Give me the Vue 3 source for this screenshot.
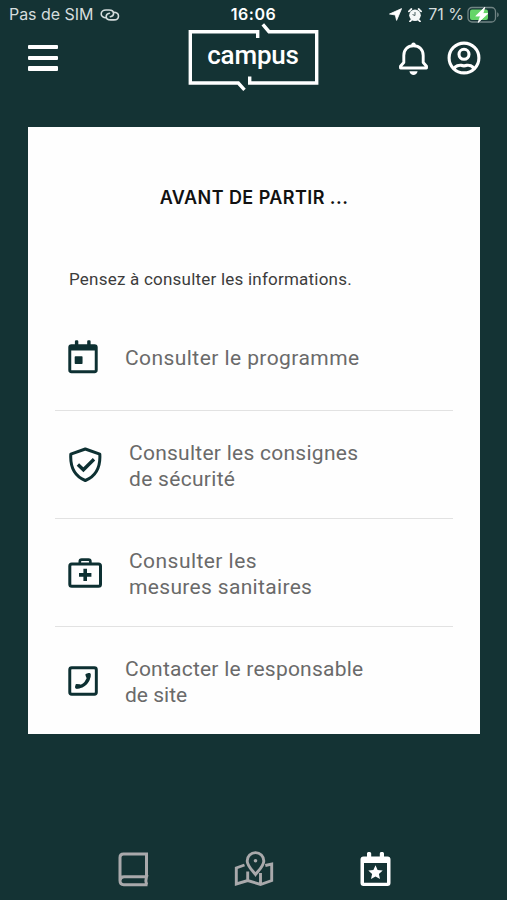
<script setup>
import { ref } from 'vue'

const activeTab = ref('agenda')

const items = [
  { icon: 'calendar', lines: [{ text: 'Consulter le programme', spacing: 0.43 }] },
  {
    icon: 'shield',
    lines: [
      { text: 'Consulter les consignes', spacing: 0.26 },
      { text: 'de sécurité', spacing: 0.3 },
    ],
  },
  {
    icon: 'kit',
    lines: [
      { text: 'Consulter les', spacing: 0.45 },
      { text: 'mesures sanitaires', spacing: 0.33 },
    ],
  },
  {
    icon: 'phone',
    lines: [
      { text: 'Contacter le responsable', spacing: 0.23 },
      { text: 'de site', spacing: 0 },
    ],
  },
]
</script>

<template>
  <div class="screen">
    <!-- Status bar -->
    <div class="status">
      <div class="status-left">
        <span class="carrier">Pas de SIM</span>
        <svg class="link" width="20" height="12" viewBox="0 0 20 12" fill="none" stroke="#d5dddd" stroke-width="1.6" stroke-linecap="round">
          <path d="M6 8.7C3.2 8.7 1.2 7.2 1.2 5C1.2 2.6 3.2 1 6 1H9C11.8 1 13.6 2.6 13.6 4.6C13.6 6.2 12.3 7.5 10.3 7.7" />
          <path d="M13.4 3.2C16.5 3.2 18.5 4.7 18.5 6.9C18.5 9.3 16.5 10.9 13.8 10.9H10.8C8 10.9 6.2 9.3 6.2 7.4C6.2 5.7 7.5 4.4 9.5 4.2" />
        </svg>
      </div>
      <span class="clock">16:06</span>
      <div class="status-right">
        <svg width="13" height="13" viewBox="0 0 13 13"><path d="M12.6 0.6L7.6 12.4L6.3 7L0.5 6Z" fill="#fff" stroke="#fff" stroke-width="0.8" stroke-linejoin="round" /></svg>
        <svg width="14" height="14" viewBox="0 0 14 14">
          <circle cx="7" cy="7.3" r="5.8" fill="#f4f7f7" />
          <path d="M0.9 3.3L3.4 1M13.1 3.3L10.6 1M3.2 12.2L2 13.4M10.8 12.2L12 13.4" stroke="#f4f7f7" stroke-width="1.8" stroke-linecap="round" />
          <path d="M7 4.4V7.5L4.9 6.7" fill="none" stroke="#4d6263" stroke-width="1" stroke-linecap="round" />
        </svg>
        <span class="percent">71 %</span>
        <svg class="battery" width="33" height="18" viewBox="0 0 33 18">
          <rect x="1" y="1.5" width="27.5" height="14.5" rx="4" fill="none" stroke="#718484" stroke-width="1.3" />
          <path d="M30.2 6.2C32.2 7 32.2 10.4 30.2 11.2Z" fill="#718484" />
          <rect x="3" y="3.5" width="18" height="10.5" rx="2" fill="#65d568" />
          <path d="M17.8 1.2L8.8 10H13.6L11.2 16.4L20.8 7.6H15.8Z" fill="#fff" stroke="#fff" stroke-width="0.9" stroke-linejoin="round" />
        </svg>
      </div>
    </div>

    <!-- Header -->
    <header class="header">
      <button class="burger" aria-label="Menu"><i></i><i></i><i></i></button>
      <div class="logo">
        <svg class="logo-frame" width="132" height="70" viewBox="0 0 132 70" fill="none" stroke="#fff" stroke-width="3.4">
          <path d="M70.7 16V9.7H3.3V61H51.3L57.5 67.8" />
          <path d="M62.7 54.5V61H129.7V9.7H82L75.8 2.3" />
        </svg>
        <span class="logo-text">campus</span>
      </div>
      <div class="actions">
        <svg width="32" height="36" viewBox="0 0 32 36">
          <path d="M2.5 27V25.3L5.8 21.5V14.5C5.8 9 9.5 4.8 15.5 4.8S25.2 9 25.2 14.5V21.5L28.5 25.3V27Z" fill="none" stroke="#fff" stroke-width="2.9" stroke-linejoin="round" />
          <path d="M13.3 4.8V3.6A2.2 2.2 0 0 1 17.7 3.6V4.8Z" fill="#fff" />
          <path d="M11.4 30.2H19.6C19 32.8 17.5 34 15.5 34S12 32.8 11.4 30.2Z" fill="#fff" />
        </svg>
        <svg width="34" height="34" viewBox="0 0 34 34" fill="none" stroke="#fff" stroke-width="3.1">
          <circle cx="17" cy="17" r="14.9" />
          <circle cx="17" cy="13.3" r="5" />
          <path d="M7.2 27.7C8.4 24.8 12.2 24 14 24.3C16 25 18 25 20 24.3C22 24 25.6 24.8 26.8 27.7" />
        </svg>
      </div>
    </header>

    <!-- Checklist -->
    <main class="card">
      <h1 class="title">AVANT DE PARTIR ...</h1>
      <p class="intro">Pensez à consulter les informations.</p>
      <ul class="list">
        <li v-for="item in items" :key="item.icon" class="item">
          <svg v-if="item.icon === 'calendar'" width="30" height="34" viewBox="0 0 30.5 34">
            <path d="M3.5 4H7V1.2Q7 0 8.2 0H9.3Q10.5 0 10.5 1.2V4H19.5V1.2Q19.5 0 20.7 0H21.8Q23 0 23 1.2V4H27Q30.2 4 30.2 7.2V30.3Q30.2 33.5 27 33.5H3.5Q0.3 33.5 0.3 30.3V7.2Q0.3 4 3.5 4ZM3.3 10.5V30.5H27.2V10.5Z" fill="#0d3032" fill-rule="evenodd" />
            <rect x="6.8" y="16.2" width="8" height="8" rx="0.8" fill="#0d3032" />
          </svg>
          <svg v-else-if="item.icon === 'shield'" width="34" height="36" viewBox="0 0 34 36" fill="none" stroke="#0d3032" stroke-width="3" stroke-linejoin="round">
            <path d="M17.3 2L31.8 7.2C32.5 18.8 28.7 28.8 17.3 33.5C5.9 28.8 2.1 18.8 2.8 7.2Z" />
            <path d="M9.9 17.5L15.4 22.8L26 12.2" stroke-width="3.4" stroke-linejoin="miter" />
          </svg>
          <svg v-else-if="item.icon === 'kit'" width="34" height="30" viewBox="0 0 34 30" fill="none" stroke="#0d3032" stroke-width="3">
            <rect x="1.8" y="6" width="30.7" height="22.3" rx="2" />
            <path d="M11.8 5.5V3.5Q11.8 1.6 13.7 1.6H20.5Q22.4 1.6 22.4 3.5V5.5" stroke-width="2.6" />
            <path d="M17.2 10.7V23M11 16.9H23.4" stroke-width="3.6" />
          </svg>
          <svg v-else width="30" height="30" viewBox="0 0 30.5 30" fill="none" stroke="#0d3032" stroke-linecap="round" stroke-linejoin="round">
            <rect x="1.8" y="1.5" width="27" height="27" rx="2" stroke-width="3" />
            <path d="M21.4 8.5C21.4 15 16.5 20.8 9 21.1" stroke-width="3.4" />
            <path d="M18.8 8.7L21.6 8L21.6 11L19.5 10.8ZM8.7 19.1L11.6 19.5L11.8 21.3L8.5 21.6Z" fill="#0d3032" stroke-width="2.2" />
          </svg>
          <span class="label">
            <span v-for="line in item.lines" :key="line.text" class="line" :style="{ letterSpacing: line.spacing + 'px' }">{{ line.text }}</span>
          </span>
        </li>
      </ul>
    </main>

    <!-- Tabs -->
    <nav class="tabs">
      <button class="tab" :class="{ active: activeTab === 'guide' }" aria-label="Guide" @click="activeTab = 'guide'">
        <svg width="31" height="35" viewBox="0 0 31 35" fill="none" stroke="currentColor" stroke-width="3">
          <path d="M28.5 24.8V2H5.5Q2 2 2 5.5V28.5Q2 32.7 5.8 32.7H29.5M2 28.7Q2.3 24.8 6 24.8H28.5Q27.2 28.7 28.7 32.7" />
        </svg>
      </button>
      <button class="tab" :class="{ active: activeTab === 'plan' }" aria-label="Plan" @click="activeTab = 'plan'">
        <svg width="40" height="36" viewBox="0 0 40 36" fill="none" stroke="currentColor" stroke-width="2.9">
          <path d="M10.5 14L2.3 17V33L13.7 29.5L26.5 33.5L37.7 29.5V13L31.3 14.5M13.7 20.5V29.5M26.5 22V33.5" />
          <path d="M21.5 23.5C18.5 19.5 13.2 14.8 13.2 9.9A8.3 8.3 0 0 1 29.8 9.9C29.8 14.8 24.5 19.5 21.5 23.5Z" />
          <circle cx="21.5" cy="9.7" r="1.8" fill="currentColor" stroke="none" />
        </svg>
      </button>
      <button class="tab" :class="{ active: activeTab === 'agenda' }" aria-label="Agenda" @click="activeTab = 'agenda'">
        <svg width="31" height="35" viewBox="0 0 31 35" fill="currentColor">
          <path d="M3.5 4.5H7V1.5Q7 0 8.2 0H9.8Q11.2 0 11.2 1.5V4.5H19.8V1.5Q19.8 0 21 0H22.6Q24 0 24 1.5V4.5H27.5Q30.5 4.5 30.5 7.5V31Q30.5 34 27.5 34H3.5Q0.5 34 0.5 31V7.5Q0.5 4.5 3.5 4.5ZM4 11V30.7H27V11Z" fill-rule="evenodd" />
          <path d="M15.5 13.3L17.6 18L22.7 18.6L18.9 22L20 27L15.5 24.5L11 27L12.1 22L8.3 18.6L13.4 18Z" />
        </svg>
      </button>
    </nav>
  </div>
</template>

<style>
body {
  background: #143334;
}
</style>

<style scoped>
.screen {
  width: 507px;
  height: 900px;
  display: flex;
  flex-direction: column;
  overflow: hidden;
  background: #143334;
  font-family: Roboto, 'Liberation Sans', sans-serif;
}
button {
  border: 0;
  padding: 0;
  background: none;
  color: inherit;
}
svg {
  display: block;
  flex: none;
}
.status {
  height: 29px;
  display: grid;
  grid-template-columns: 1fr auto 1fr;
  align-items: center;
  padding: 0 7px 0 9px;
  color: #d5dddd;
  font-family: Inter, sans-serif;
  font-size: 16px;
  line-height: 29px;
}
.status-left,
.status-right {
  display: flex;
  align-items: center;
}
.status-left {
  gap: 7px;
}
.status-right {
  justify-content: flex-end;
  gap: 6px;
}
.carrier {
  letter-spacing: -0.05px;
}
.clock {
  margin-left: -2px;
  color: #fff;
  font-weight: 600;
  letter-spacing: 0.5px;
}
.battery {
  margin-left: -3px;
}
.header {
  height: 98px;
  display: grid;
  grid-template-columns: 1fr 132px 1fr;
  align-items: start;
  padding: 0 26px 0 26px;
}
.burger {
  display: flex;
  flex-direction: column;
  gap: 6.5px;
  margin: 16px 0 0 2px;
  width: 30px;
}
.burger i {
  height: 4.2px;
  border-radius: 1px;
  background: #fff;
}
.logo {
  display: grid;
  margin: -7px 0 0 -1px;
}
.logo-frame,
.logo-text {
  grid-area: 1 / 1;
}
.logo-text {
  color: #fff;
  font-size: 26px;
  font-weight: 500;
  line-height: 67px;
  letter-spacing: -0.2px;
  text-align: center;
}
.actions {
  display: flex;
  justify-content: flex-end;
  gap: 17px;
  margin-top: 12px;
}
.card {
  width: 452px;
  height: 607px;
  margin-left: 28px;
  box-sizing: border-box;
  padding: 0 27px;
  overflow: hidden;
  background: #fefefe;
}
.title {
  margin: 0;
  padding-top: 56px;
  color: #111;
  font-family: Inter, sans-serif;
  font-size: 18px;
  font-weight: 600;
  line-height: 30px;
  letter-spacing: 0.43px;
  text-align: center;
}
.intro {
  margin: 0;
  padding: 54px 0 11px 14px;
  color: #3c3c3c;
  font-size: 17px;
  line-height: 25px;
  letter-spacing: 0.22px;
}
.list {
  margin: 0;
  padding: 0;
  list-style: none;
}
.item {
  height: 108px;
  box-sizing: border-box;
  display: flex;
  align-items: center;
  gap: 27px;
  padding: 1px 0 0 13px;
  border-bottom: 1px solid #e2e2e2;
}
.label {
  display: flex;
  flex-direction: column;
  padding-top: 4px;
  color: #6a6a6a;
  font-size: 21px;
  line-height: 25.7px;
}
.line {
  white-space: nowrap;
}
.tabs {
  display: flex;
  align-items: center;
  gap: 85px;
  margin-top: 117px;
  padding-left: 118px;
}
.tab {
  color: #a9a9ab;
}
.tab.active {
  margin-left: 1px;
  color: #fff;
}
</style>
